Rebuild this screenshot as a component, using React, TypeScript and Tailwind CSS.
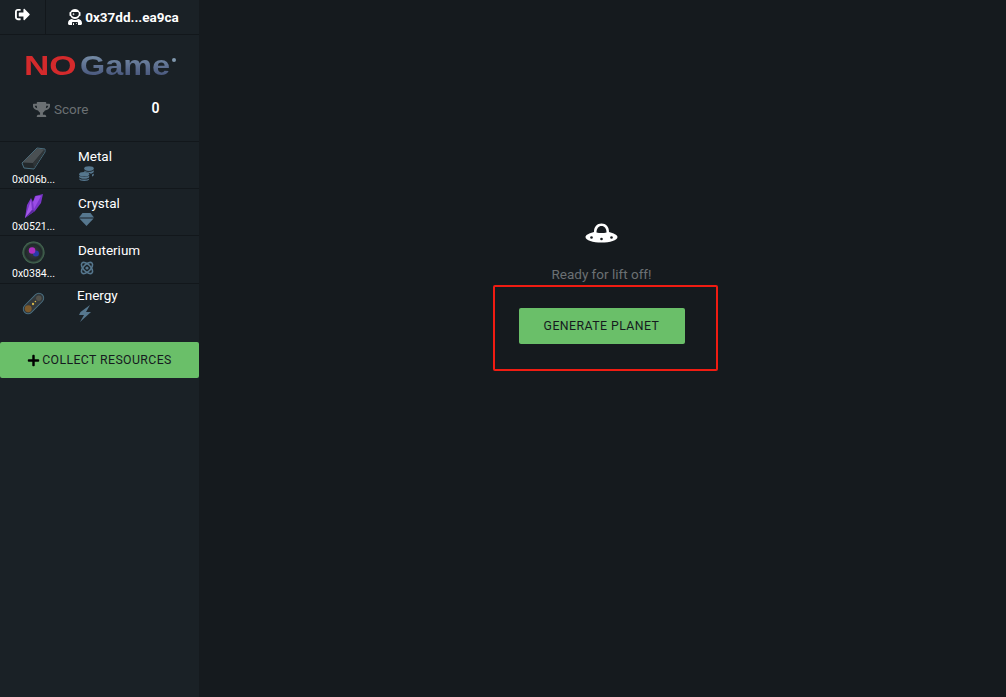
import { FaPlus, FaSignOutAlt, FaTrophy, FaUserAstronaut } from "react-icons/fa";
import type { ReactNode } from "react";

function UfoIcon() {
  return (
    <svg width="33" height="20" viewBox="0 0 33 20">
      <path d="M9 9 C9 3.5 12 0.5 16.5 0.5 C21 0.5 24 3.5 24 9 C28.5 10 32.5 12 32.5 14 C32.5 17.5 25 19.5 16.5 19.5 C8 19.5 0.5 17.5 0.5 14 C0.5 12 4.5 10 9 9 Z" fill="#fff" />
      <path d="M11.5 9.5 C11.5 5.5 13.5 3 16.5 3 C19.5 3 21.5 5.5 21.5 9.5 C18.5 10.3 14.5 10.3 11.5 9.5 Z" fill="#151a1e" />
      <circle cx="6.5" cy="14.5" r="1.3" fill="#151a1e" />
      <circle cx="16.5" cy="16" r="1.3" fill="#151a1e" />
      <circle cx="26.5" cy="14.5" r="1.3" fill="#151a1e" />
    </svg>
  );
}

function MetalIcon() {
  return (
    <svg width="25" height="23" viewBox="0 0 25 23">
      <path d="M1 16 L16 1 L24 2 L24 5 L13 22 L3 21 Z" fill="#23292c" stroke="#4a6f80" strokeWidth="1" strokeLinejoin="round" />
      <path d="M1.5 15.5 L16 1.5 L23.5 2.5 L12 16 Z" fill="#4a5053" />
      <path d="M23.5 2.5 L12 16 L13 21.5 L23.5 5 Z" fill="#2f3538" />
    </svg>
  );
}

function CrystalIcon() {
  return (
    <svg width="20" height="26" viewBox="0 0 20 26">
      <path d="M1 25 L3 12 L7 5 L9 9 L11 3 L19 1 L17 10 L11 18 Z" fill="#7a35c9" />
      <path d="M1 25 L7 7 L8 17 Z" fill="#a55be8" />
      <path d="M9 9 L12 3 L17 3 L10 16 Z" fill="#9b4ce6" />
      <path d="M1 25 L8 17 L11 18 Z" fill="#5a2a9c" />
    </svg>
  );
}

function DeuteriumIcon() {
  return (
    <svg width="23" height="23" viewBox="0 0 24 24">
      <defs>
        <radialGradient id="deut" cx="50%" cy="50%" r="50%">
          <stop offset="0%" stopColor="#3a3a46" />
          <stop offset="75%" stopColor="#20292a" />
          <stop offset="100%" stopColor="#4b7358" />
        </radialGradient>
      </defs>
      <circle cx="12" cy="12" r="11.5" fill="url(#deut)" />
      <circle cx="14.5" cy="13" r="3.2" fill="#2a3aa8" />
      <circle cx="10.5" cy="10" r="3.4" fill="#b02fc0" />
    </svg>
  );
}

function EnergyIcon() {
  return (
    <svg width="23" height="23" viewBox="0 0 24 24">
      <rect x="7" y="-1" width="10" height="26" rx="5" transform="rotate(45 12 12)" fill="#33393c" stroke="#4a6f80" strokeWidth="1" />
      <circle cx="6.5" cy="17.5" r="3.6" fill="#7c5a2c" />
      <circle cx="17.5" cy="6.5" r="2.8" fill="#54524a" />
      <circle cx="11.5" cy="12.5" r="1.2" fill="#d8b84a" />
      <circle cx="14" cy="10" r="0.8" fill="#d8b84a" />
    </svg>
  );
}

function CoinsIcon() {
  return (
    <svg width="15" height="15" viewBox="0 0 15 15" fill="currentColor">
      <ellipse cx="10" cy="2.6" rx="4.8" ry="2.3" />
      <path d="M5.4 4.4 C6.5 5.4 8.2 5.8 10 5.8 C11.8 5.8 13.6 5.3 14.8 4.2 V5.6 C14.8 6.6 13.6 7.4 12 7.8 C10.8 6.8 8.6 6.2 5.4 6.2 Z" />
      <path d="M13 8.6 C13.9 8.3 14.3 8 14.8 7.5 V9 C14.8 9.6 14 10.2 13 10.6 Z" />
      <ellipse cx="5.2" cy="8.2" rx="5" ry="2.3" />
      <path d="M0.2 9.6 C1.3 10.6 3.2 11 5.2 11 C7.2 11 9.1 10.6 10.2 9.6 V11 C10.2 12 8 12.8 5.2 12.8 C2.4 12.8 0.2 12 0.2 11 Z" />
      <path d="M0.2 12.4 C1.3 13.3 3.2 13.6 5.2 13.6 C7.2 13.6 9.1 13.3 10.2 12.4 V13 C10.2 14 8 15 5.2 15 C2.4 15 0.2 14 0.2 13 Z" />
    </svg>
  );
}

function GemIcon() {
  return (
    <svg width="15" height="13" viewBox="0 0 15 13" fill="currentColor">
      <path d="M3.5 0 H11.5 L15 4.6 H0 Z" />
      <path d="M0.4 5.6 H14.6 L7.5 13 Z" />
    </svg>
  );
}

function AtomIcon() {
  return (
    <svg width="16" height="16" viewBox="0 0 16 16" fill="none" stroke="currentColor" strokeWidth="1.6">
      <ellipse cx="8" cy="8" rx="7" ry="3.6" transform="rotate(45 8 8)" />
      <ellipse cx="8" cy="8" rx="7" ry="3.6" transform="rotate(-45 8 8)" />
      <circle cx="8" cy="8" r="1.6" fill="currentColor" stroke="none" />
    </svg>
  );
}

function BoltIcon() {
  return (
    <svg width="14" height="17" viewBox="0 0 14 17" fill="currentColor">
      <path d="M12 0 L2.5 7 L1 10 H6 L2 17 L13 7 L8 7 Z" />
    </svg>
  );
}

function ResourceRow({ image, address, name, icon, height, imagePad, textPad, labelPad }: { image: ReactNode; address?: string; name: string; icon: ReactNode; height: string; imagePad: string; textPad: string; labelPad: string }) {
  return (
    <div className={`flex border-t border-[#12171b] ${height}`}>
      <div className={`w-[67px] flex flex-col items-center ${imagePad}`}>
        <div className="h-[29px] flex items-center justify-center">{image}</div>
        {address && <div className="text-[10.5px] leading-[14px] text-white">{address}</div>}
      </div>
      <div className={`${labelPad} ${textPad}`}>
        <div className="text-[13.5px] leading-[17px] text-white">{name}</div>
        <div className="text-[#56778e] pl-[1px] mt-[1px]">{icon}</div>
      </div>
    </div>
  );
}

export default function App() {
  return (
    <div className="flex h-[697px] w-[1006px] bg-[#151a1e] text-white overflow-hidden" style={{ fontFamily: 'Roboto, sans-serif' }}>
      <aside className="w-[199px] bg-[#1a2126] flex flex-col shrink-0">
        <div className="flex h-[35px] border-b border-[#12171b]">
          <div className="w-[46px] border-r border-[#12171b] flex justify-center pt-[7px]">
            <FaSignOutAlt className="text-[15px]" />
          </div>
          <div className="flex-1 flex justify-center items-center gap-[2px] pl-[1px]">
            <FaUserAstronaut className="text-[16px]" />
            <span className="text-[13.5px] font-bold">0x37dd...ea9ca</span>
          </div>
        </div>

        <div className="h-[46px] mt-[8px] mb-[1px] flex items-center justify-center">
          <div className="relative flex w-[152px] text-[27px] leading-[30px] font-bold" style={{ fontFamily: '"Liberation Sans", sans-serif' }}>
            <span className="inline-block w-[56px] origin-left scale-x-[1.3] text-[#d42a2c]">NO</span>
            <span className="inline-block w-[96px] origin-left scale-x-[1.2] bg-gradient-to-b from-[#8199b0] to-[#3e4a72] bg-clip-text text-transparent">Game</span>
            <span className="absolute right-0 top-[7px] w-[4px] h-[4px] rounded-full bg-[#7f97ad]"></span>
          </div>
        </div>

        <div className="flex h-[51px] items-start pt-[9px]">
          <div className="flex items-center gap-[4px] pl-[33px] text-[#6b7073]">
            <FaTrophy className="text-[17px]" />
            <span className="text-[13.5px]">Score</span>
          </div>
          <span className="ml-[63px] mt-[2px] text-[14px] font-semibold leading-[15px]">0</span>
        </div>

        <ResourceRow image={<MetalIcon />} address="0x006b..." name="Metal" icon={<CoinsIcon />} height="h-[47px]" imagePad="pt-[2px]" textPad="pt-[6px]" labelPad="pl-[11px]" />
        <ResourceRow image={<CrystalIcon />} address="0x0521..." name="Crystal" icon={<GemIcon />} height="h-[47px]" imagePad="pt-[2px]" textPad="pt-[6px]" labelPad="pl-[11px]" />
        <ResourceRow image={<DeuteriumIcon />} address="0x0384..." name="Deuterium" icon={<AtomIcon />} height="h-[48px]" imagePad="pt-[2px]" textPad="pt-[6px]" labelPad="pl-[11px]" />
        <ResourceRow image={<EnergyIcon />} name="Energy" icon={<BoltIcon />} height="h-[47px]" imagePad="pt-[5px]" textPad="pt-[3px]" labelPad="pl-[10px]" />

        <button className="mt-[12px] h-[36px] w-full bg-[#6abf69] rounded-[2px] flex items-center justify-center gap-[2px] text-[#151a1e] text-[12.3px] tracking-[0.4px]">
          <FaPlus className="text-[13px] text-black" />
          COLLECT RESOURCES
        </button>
      </aside>

      <main className="flex-1 flex flex-col items-center pt-[223px] pr-[2px]">
        <UfoIcon />
        <p className="mt-[22px] text-[13.5px] leading-[18px] text-[#6b7073]">Ready for lift off!</p>
        <div className="relative mt-[25px]">
          <button className="block w-[166px] h-[36px] pt-[1px] bg-[#6abf69] rounded-[2px] text-[#151a1e] text-[12.3px] tracking-[0.45px]">
            GENERATE PLANET
          </button>
          <span className="absolute -left-[26px] -right-[33px] -top-[23px] -bottom-[27px] border-2 border-[#f01c12] rounded-[2px]"></span>
        </div>
      </main>
    </div>
  );
}
